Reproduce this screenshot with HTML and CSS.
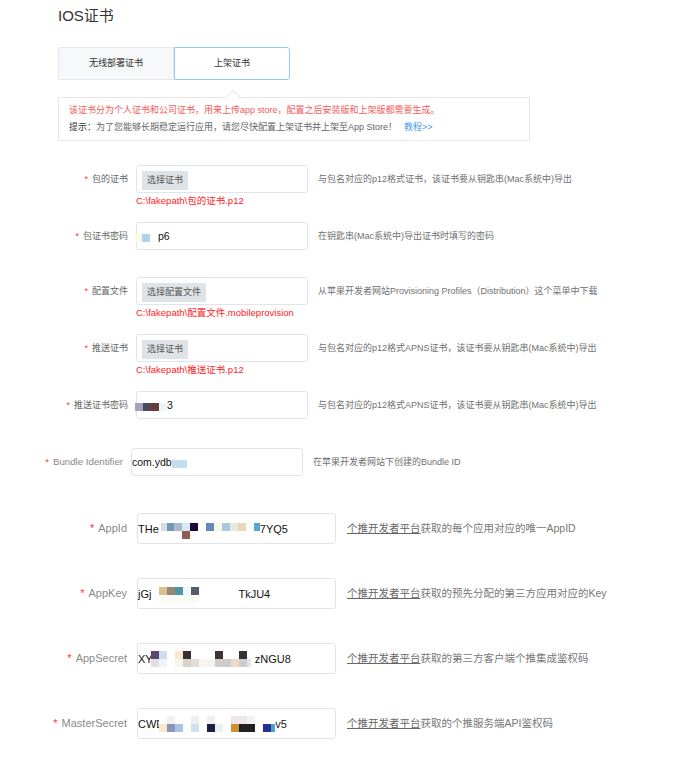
FILE: index.html
```html
<!DOCTYPE html>
<html lang="zh-CN">
<head>
  <meta charset="UTF-8">
  <meta name="viewport" content="width=device-width, initial-scale=1.0">
  <title>IOS证书</title>
  <link rel="stylesheet" href="styles.css">
</head>
<body>
  <div class="page">
    <h1 class="title">IOS证书</h1>
    <div class="tabs">
      <div class="tab">无线部署证书</div>
      <div class="tab tab-active">上架证书</div>
    </div>
    <div class="notice">
      <p class="notice-warn">该证书分为个人证书和公司证书，用来上传app store，配置之后安装版和上架版都需要生成。</p>
      <p class="notice-tip"><span class="notice-key">提示：</span>为了您能够长期稳定运行应用，请您尽快配置上架证书并上架至App Store！<a href="#" class="notice-link">教程&gt;&gt;</a></p>
    </div>

    <form class="form">
      <div class="row">
        <label class="row-label"><span class="star">*</span>包的证书</label>
        <div class="field-col">
          <div class="file-box"><span class="file-btn">选择证书</span></div>
          <p class="file-path">C:\fakepath\包的证书.p12</p>
        </div>
        <p class="row-help">与包名对应的p12格式证书，该证书要从钥匙串(Mac系统中)导出</p>
      </div>

      <div class="row row-short">
        <label class="row-label"><span class="star">*</span>包证书密码</label>
        <div class="field-col">
          <div class="field"><span class="mask mask-row mask-pwd"></span><span class="value">p6</span></div>
        </div>
        <p class="row-help">在钥匙串(Mac系统中)导出证书时填写的密码</p>
      </div>

      <div class="row">
        <label class="row-label"><span class="star">*</span>配置文件</label>
        <div class="field-col">
          <div class="file-box"><span class="file-btn">选择配置文件</span></div>
          <p class="file-path">C:\fakepath\配置文件.mobileprovision</p>
        </div>
        <p class="row-help">从苹果开发者网站Provisioning Profiles（Distribution）这个菜单中下载</p>
      </div>

      <div class="row">
        <label class="row-label"><span class="star">*</span>推送证书</label>
        <div class="field-col">
          <div class="file-box"><span class="file-btn">选择证书</span></div>
          <p class="file-path">C:\fakepath\推送证书.p12</p>
        </div>
        <p class="row-help">与包名对应的p12格式APNS证书，该证书要从钥匙串(Mac系统中)导出</p>
      </div>

      <div class="row">
        <label class="row-label"><span class="star">*</span>推送证书密码</label>
        <div class="field-col">
          <div class="field"><span class="mask mask-row mask-push"></span><span class="value">3</span></div>
        </div>
        <p class="row-help">与包名对应的p12格式APNS证书，该证书要从钥匙串(Mac系统中)导出</p>
      </div>

      <div class="row row-bundle">
        <label class="row-label row-label-latin"><span class="star">*</span>Bundle Identifier</label>
        <div class="field-col">
          <div class="field field-flush"><span class="value">com.ydb</span><span class="mask mask-row mask-bundle"></span></div>
        </div>
        <p class="row-help">在苹果开发者网站下创建的Bundle ID</p>
      </div>

      <div class="row row-long">
        <label class="row-label"><span class="star">*</span>AppId</label>
        <div class="field-col">
          <div class="field"><span class="value">THe</span><span class="mask mask-appid"></span><span class="value">7YQ5</span></div>
        </div>
        <p class="row-help"><a href="#" class="help-link">个推开发者平台</a>获取的每个应用对应的唯一AppID</p>
      </div>

      <div class="row row-long">
        <label class="row-label"><span class="star">*</span>AppKey</label>
        <div class="field-col">
          <div class="field"><span class="value">jGj</span><span class="mask mask-appkey"></span><span class="value">TkJU4</span></div>
        </div>
        <p class="row-help"><a href="#" class="help-link">个推开发者平台</a>获取的预先分配的第三方应用对应的Key</p>
      </div>

      <div class="row row-long">
        <label class="row-label"><span class="star">*</span>AppSecret</label>
        <div class="field-col">
          <div class="field"><span class="value">XY</span><span class="mask mask-secret"></span><span class="value">zNGU8</span></div>
        </div>
        <p class="row-help"><a href="#" class="help-link">个推开发者平台</a>获取的第三方客户端个推集成鉴权码</p>
      </div>

      <div class="row row-long">
        <label class="row-label"><span class="star">*</span>MasterSecret</label>
        <div class="field-col">
          <div class="field"><span class="value">CWD</span><span class="mask mask-master"></span><span class="value">v5</span></div>
        </div>
        <p class="row-help"><a href="#" class="help-link">个推开发者平台</a>获取的个推服务端API鉴权码</p>
      </div>
    </form>
  </div>
</body>
</html>
```

FILE: styles.css
```css
* {
  margin: 0;
  padding: 0;
  box-sizing: border-box;
}
body {
  font-family: "Liberation Sans", "Noto Sans CJK SC", sans-serif;
  background-color: #fff;
  color: #333;
}
.page {
  width: 685px;
  min-height: 757px;
}
.title {
  margin-left: 58px;
  padding-top: 6px;
  font-size: 15px;
  line-height: 20px;
  font-weight: normal;
  color: #333;
}

/* tabs */
.tabs {
  display: flex;
  margin: 21px 0 0 58px;
}
.tab {
  width: 116px;
  height: 33px;
  line-height: 31px;
  text-align: center;
  font-size: 9px;
  color: #333;
  background-color: #f7f8fa;
  border: 1px solid #e4e6ea;
  border-radius: 3px 0 0 3px;
}
.tab-active {
  background-color: #fff;
  border-color: #93cbf1;
  border-radius: 0 3px 3px 0;
}

/* notice */
.notice {
  position: relative;
  width: 472px;
  margin: 17px 0 0 58px;
  padding: 4px 10px;
  border: 1px solid #e6e6e6;
  font-size: 9px;
  line-height: 17px;
}
.notice::before {
  content: "";
  position: absolute;
  top: -6.5px;
  left: 167.5px;
  width: 11px;
  height: 11px;
  background-color: #fff;
  border-top: 1px solid #e6e6e6;
  border-left: 1px solid #e6e6e6;
  transform: rotate(45deg);
}
.notice-warn {
  color: #f45b5b;
}
.notice-tip {
  color: #666;
}
.notice-key {
  color: #333;
}
.notice-link {
  margin-left: 7px;
  color: #3d9be9;
  text-decoration: none;
}

/* form rows */
.form {
  margin-top: 24px;
}
.row {
  display: flex;
  align-items: flex-start;
  height: 57px;
}
.row-short {
  height: 55px;
}
.row-bundle {
  height: 65px;
}
.row-long {
  height: 65px;
}
.row-label {
  flex: none;
  width: 128px;
  margin-right: 8px;
  display: flex;
  justify-content: flex-end;
  white-space: nowrap;
  font-size: 9px;
  line-height: 28px;
  color: #666;
}
.row-label-latin {
  width: 123px;
  font-size: 9.7px;
  color: #888;
}
.star {
  color: #f33;
  margin-right: 4px;
}
.field-col {
  flex: none;
  width: 172px;
}
.file-box {
  height: 28px;
  padding: 3px 5px;
  border: 1px solid #e1e4ea;
  border-radius: 3px;
}
.file-btn {
  display: inline-block;
  height: 19px;
  line-height: 19px;
  padding: 0 5px;
  font-size: 9px;
  color: #555;
  background-color: #dfe3e8;
}
.file-path {
  margin-top: 1px;
  font-size: 9.5px;
  line-height: 14px;
  color: #f22;
  white-space: nowrap;
}
.field {
  display: flex;
  align-items: center;
  height: 28px;
  border: 1px solid #e1e4ea;
  border-radius: 3px;
  white-space: nowrap;
}
.value {
  font-size: 10.5px;
  color: #111;
}
.row-help {
  margin-left: 10px;
  font-size: 9px;
  line-height: 28px;
  color: #707070;
  white-space: nowrap;
}
.row-long .row-label {
  width: 127px;
  margin-right: 10px;
  font-size: 11px;
  line-height: 31px;
  color: #8a8a8a;
}
.row-long .star {
  font-size: 11px;
}
.row-long .field-col {
  width: 199px;
}
.row-long .field {
  height: 31px;
}
.row-long .value {
  font-size: 11px;
}
.row-long .row-help {
  margin-left: 11px;
  font-size: 10.5px;
  line-height: 31px;
  color: #777;
}
.help-link {
  color: #666;
  text-decoration: underline;
}

/* redaction mosaics */
.mask {
  display: inline-block;
  flex: none;
  height: 16px;
  background-repeat: no-repeat;
  background-size: 100% 8px;
  background-position: top, bottom;
}
.mask-row {
  height: 8px;
  background-size: 100% 8px;
}
.mask-pwd {
  width: 16px;
  margin: 4px 8px 0 -3px;
  background-image: linear-gradient(to right, #fbfbe6 0 8px, #a8d4f0 8px 16px);
}
.mask-push {
  width: 32px;
  margin: 4px 0 0 -2px;
  background-image: linear-gradient(to right, #a8a0c0 0 8px, #4a4a5c 8px 16px, #6b3a34 16px 24px, #e8f6fa 24px 32px);
}
.mask-bundle {
  width: 15px;
  margin-top: 4px;
  background-image: linear-gradient(to right, #c5dcef 0 15px);
}
.field-flush {
  padding-left: 0;
}
.mask-appid {
  width: 99px;
  margin: 5px 0 0 2px;
  background-image:
    linear-gradient(to right, #d9dce3 0 6px, #6e98b3 6px 13px, #a9b8d0 13px 21px, #d6eaf3 21px 29px, #1a0c3a 29px 37px, transparent 37px 45px, #6687bc 45px 53px, #f7f8e0 53px 61px, #a8c8de 61px 69px, #e8e8e0 69px 77px, #e6d8b8 77px 85px, transparent 85px 93px, #56a6d8 93px 99px),
    linear-gradient(to right, transparent 0 21px, #8f5c56 21px 29px, transparent 29px);
}
.mask-appkey {
  width: 40px;
  margin: 3px 39px 0 8px;
  background-image:
    linear-gradient(to right, #dcc08e 0 8px, #9a8870 8px 16px, #4c96a4 16px 24px, #f1f7fa 24px 32px, #545c65 32px 40px),
    linear-gradient(to right, #fbfbf6 0 40px);
}
.mask-secret {
  width: 100px;
  margin: 1px 4px 0 -2px;
  background-image:
    linear-gradient(to right, #5b4a70 0 8px, #cfdcea 8px 16px, transparent 16px 24px, #fbe8d0 24px 32px, #3b2e2e 32px 40px, transparent 40px 64px, #3f3632 64px 72px, transparent 72px 88px, #333 88px 96px, transparent 96px),
    linear-gradient(to right, #e8dde4 0 8px, #f2f6fa 8px 16px, #fff 16px 24px, #f8f6ee 24px 32px, #d9d2cc 32px 40px, #e3ddd5 40px 48px, #f8f8f0 48px 56px, #f3f3f3 56px 64px, #cfcccc 64px 72px, #cfcbcb 72px 80px, #efd9cc 80px 88px, #cdcdcd 88px 96px, #e0e4ef 96px 100px);
}
.mask-master {
  width: 116px;
  margin: 1px 0 0 -5px;
  background-image:
    linear-gradient(to right, #fff 0 8px, #f0f0f0 8px 16px, #fff 16px 32px, #efeff2 32px 40px, #fff 40px 48px, #efeff3 48px 56px, #fff 56px 72px, #efe6ea 72px 80px, #efe6e8 80px 88px, #f2f2f2 88px 96px, #fff 96px 116px),
    linear-gradient(to right, #fbe6c8 0 8px, #8896b8 8px 16px, #a8c4e0 16px 24px, #fff 24px 32px, #cde0ee 32px 40px, #fff 40px 48px, #1e2040 48px 56px, #e7f2f0 56px 64px, #fff 64px 72px, #c8922f 72px 80px, #202020 80px 96px, #fff 96px 104px, #2a2f8a 104px 112px, #4aa0d8 112px 116px);
}
```
